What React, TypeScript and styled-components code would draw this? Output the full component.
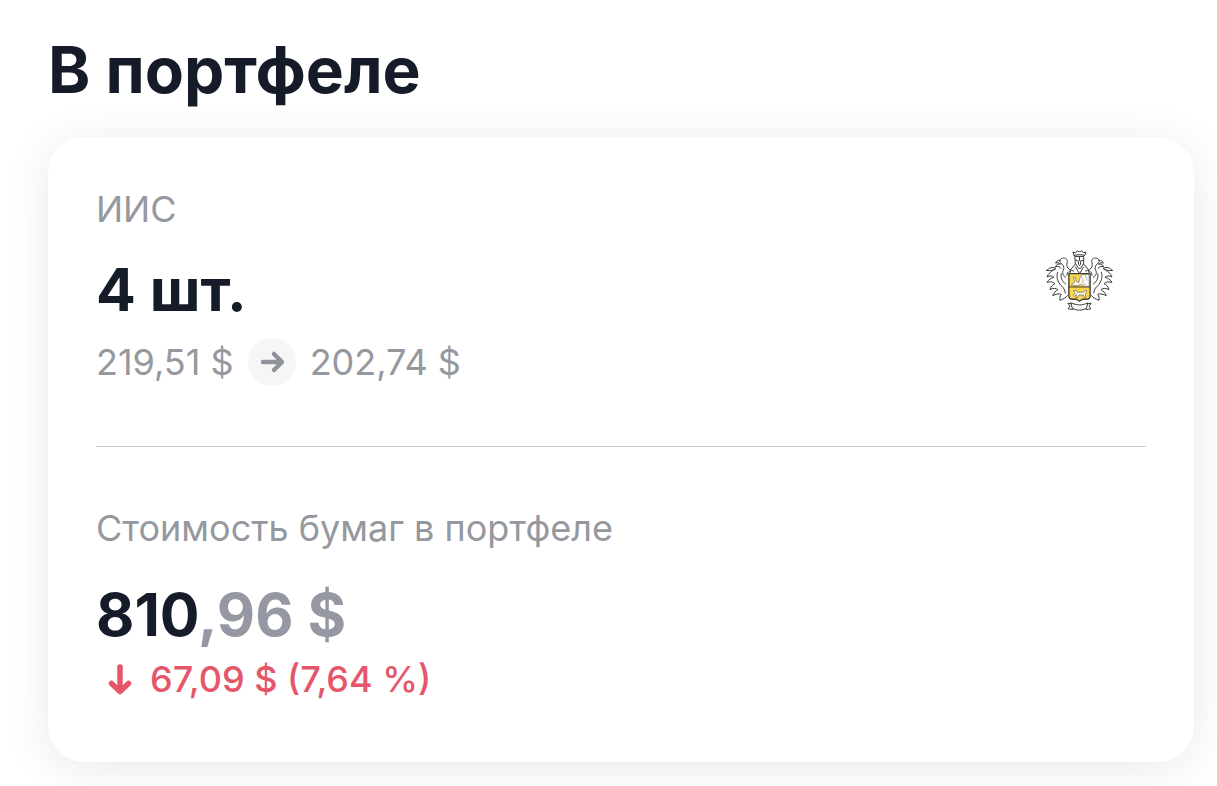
import React from 'react';
import styled, { createGlobalStyle } from 'styled-components';

const GlobalStyle = createGlobalStyle`
    * {
        box-sizing: border-box;
    }

    body {
        margin: 0;
        background: #fff;
        color: #151b28;
        font-family: Inter, "Liberation Sans", sans-serif;
    }
`;

const Page = styled.main`
    padding: 30px 23px 24px 48px;
    overflow: hidden;
`;

const Title = styled.h1`
    margin: 0 0 27px;
    font-size: 64px;
    line-height: 80px;
    font-weight: 700;
`;

const Card = styled.section`
    padding: 48px 48px 59px;
    border-radius: 36px;
    background: #fff;
    box-shadow: 0 6px 48px rgba(0, 0, 0, 0.09);
`;

const Holding = styled.div`
    display: flex;
    align-items: flex-start;
    justify-content: space-between;
    padding-bottom: 60px;
    border-bottom: 1px solid #c9cacd;
`;

const Total = styled.div`
    padding-top: 57px;
`;

const Label = styled.p<{ $gap: number }>`
    margin: 0 0 ${(p) => p.$gap}px;
    font-size: 36px;
    line-height: 48px;
    color: #95989e;
`;

const Amount = styled.p<{ $gap: number }>`
    margin: 0 0 ${(p) => p.$gap}px;
    font-size: 59px;
    line-height: 72px;
    font-weight: 700;
`;

const Cents = styled.span`
    color: #9598a2;
`;

const Prices = styled.div`
    display: flex;
    align-items: center;
    gap: 14px;
    font-size: 36px;
    line-height: 48px;
    color: #95989e;
`;

const ArrowCircle = styled.span`
    display: flex;
    align-items: center;
    justify-content: center;
    width: 48px;
    height: 48px;
    border-radius: 50%;
    background: #f6f6f7;
    color: #8f929b;
`;

const Change = styled.div`
    display: flex;
    align-items: center;
    gap: 6px;
    font-size: 36px;
    line-height: 48px;
    font-weight: 500;
    color: #e5566a;
`;

const CrestBox = styled.div`
    padding: 64px 32px 0 0;
`;

const ArrowRight = () => (
    <svg width="48" height="48" viewBox="0 0 48 48" fill="none" stroke="currentColor" strokeWidth="4.500" strokeLinecap="round" strokeLinejoin="round">
        <path d="M15 24H33M26 16L34 24L26 32" />
    </svg>
);

const ArrowDown = () => (
    <svg width="48" height="48" viewBox="0 0 48 48" fill="none" stroke="currentColor" strokeWidth="5.500" strokeLinecap="round" strokeLinejoin="round">
        <path d="M24 12V35M15.500 28.500L24 36.500L32.500 28.500" />
    </svg>
);

// left half of the foliage, drawn again mirrored for the right half
const Foliage = () => (
    <g>
        <path d="M116 93C106 91 98 86 96 78C94 70 99 65 97 60C94 54 85 51 77 57C73 61 75 67 80 71C87 77 89 84 85 91C81 99 84 106 92 112" />
        <path d="M75 61C69 60 64 63 62 69C67 67 72 68 77 72C69 71 64 74 61 80C69 77 75 80 78 85" />
        <path d="M35 91C41 83 53 80 62 84C57 91 46 93 35 91Z" />
        <path d="M62 86C51 92 40 99 36 111C44 106 52 107 57 112C48 114 41 119 36 127C47 124 55 126 60 131C52 134 47 141 45 149C54 144 63 144 69 149C62 153 57 159 53 167C63 163 72 160 79 163C75 170 74 175 75 181C84 178 93 174 98 167" />
        <path d="M68 97C63 110 68 126 79 137C86 143 91 151 91 159" />
        <path d="M79 101C76 112 82 125 92 132M104 93C99 96 96 100 96 106" />
    </g>
);

const Crest = () => (
    <svg width="69" height="64" viewBox="30 27 208 192" fill="none" stroke="#3a3a35" strokeWidth="3" strokeLinecap="round" strokeLinejoin="round" role="img" aria-label="Тинькофф">
        <Foliage />
        <g transform="translate(268 0) scale(-1 1)">
            <Foliage />
        </g>
        {/* crown */}
        <path d="M118 46L114 36L122 38L127 32L134 35L141 32L146 38L154 36L150 46C140 43 128 43 118 46Z" fill="#fff" />
        {/* helmet and collar */}
        <path d="M121 49H147L146 71L137 85H131L122 71Z" fill="#fff" />
        <path d="M122 60L131 63V73L134 77L137 73V63L146 60M134 50V61" />
        <path d="M122 71L108 88L105 99M146 71L160 88L163 99M122 81L134 101L146 81" />
        {/* shield */}
        <path d="M102 101H166V168C166 175 161 178 154 178H143L134 184L125 178H114C107 178 102 175 102 168Z" fill="#f9d64e" strokeWidth="4" />
        <path d="M102 141H166" />
        <path d="M110 134L120 126L116 112L121 111L125 125L132 128L136 112L143 104L163 103V139H148L139 132L127 137Z" fill="#fff" stroke="#6b695e" strokeWidth="2" />
        <path d="M139 111L146 118L143 127L154 136M151 105L157 120" stroke="#8a887e" strokeWidth="2" />
        <path d="M117 153L124 151L128 157L145 157L153 150L156 155L151 160L153 172L149 173L145 165L133 165L127 174L123 173L126 164L119 169L116 166L121 160Z" fill="#fff" stroke="#5b5744" strokeWidth="2" />
        {/* ribbon */}
        <path d="M111 192L99 190L105 199L100 207L114 209L116 204M157 192L169 190L163 199L168 207L154 209L152 204" />
        <path d="M109 189C125 197 143 197 159 189L155 205C142 213 126 213 113 205Z" fill="#fff" />
    </svg>
);

const App = () => {
    return (
        <>
            <GlobalStyle />
            <Page>
                <Title>В портфеле</Title>
                <Card>
                    <Holding>
                        <div>
                            <Label $gap={21}>ИИС</Label>
                            <Amount $gap={12}>4 шт.</Amount>
                            <Prices>
                                <span>219,51 $</span>
                                <ArrowCircle>
                                    <ArrowRight />
                                </ArrowCircle>
                                <span>202,74 $</span>
                            </Prices>
                        </div>
                        <CrestBox>
                            <Crest />
                        </CrestBox>
                    </Holding>
                    <Total>
                        <Label $gap={27}>Стоимость бумаг в портфеле</Label>
                        <Amount $gap={4}>
                            810<Cents>,96 $</Cents>
                        </Amount>
                        <Change>
                            <ArrowDown />
                            <span>67,09 $ (7,64 %)</span>
                        </Change>
                    </Total>
                </Card>
            </Page>
        </>
    );
};

export default App;
